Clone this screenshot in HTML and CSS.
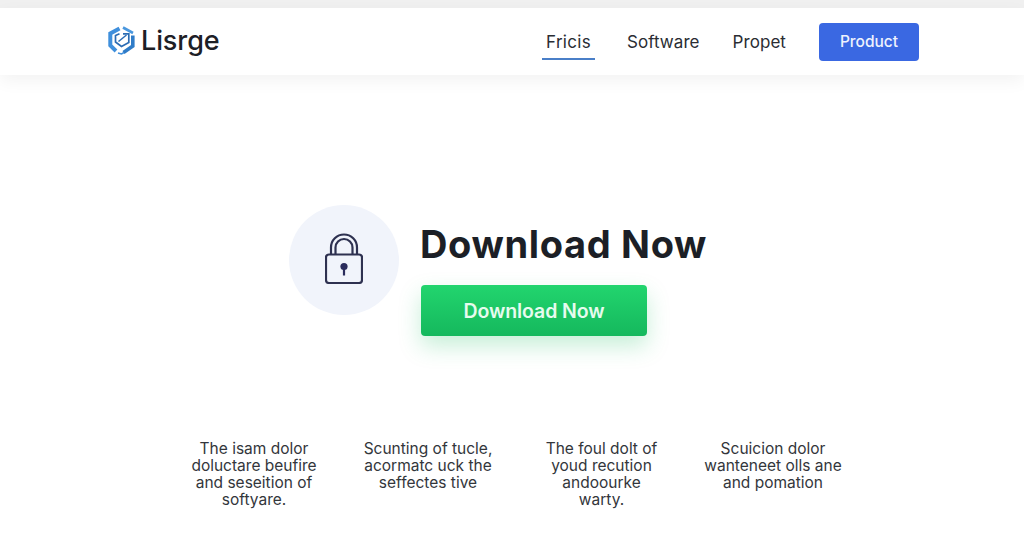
FILE: index.html
```html
<!DOCTYPE html>
<html lang="en">
    <head>
        <meta charset="UTF-8">
        <meta name="viewport" content="width=device-width, initial-scale=1.0">
        <title>Download Now</title>
        <link rel="stylesheet" href="styles.css">
    </head>
    <body>
        <header class="main-header">
            <a class="brand" href="#">
                <svg class="brand-logo" viewBox="0 0 27 29" width="27" height="29">
                    <path d="M11.500 2.500 2.300 7.500V19.500L8 25" fill="none" stroke="#3f8fdc" stroke-width="4"/>
                    <path d="M15 1.500 25 7" fill="none" stroke="#4a97de" stroke-width="2.600"/>
                    <path d="M24.800 9.500V20L15.500 26.500" fill="none" stroke="#2f7cc8" stroke-width="3.600"/>
                    <path d="M10 27 13.500 28 16 26.500" fill="none" stroke="#3f8fdc" stroke-width="1.600"/>
                    <path d="M15 7.800H20.800V16.500L13.500 20.500 7.500 16V9.500L11.500 7.800" fill="none" stroke="#2b6cb4" stroke-width="1.700"/>
                    <path d="M10.500 15.500 18.500 9" fill="none" stroke="#2b6cb4" stroke-width="1.500"/>
                </svg>
                <span>Lisrge</span>
            </a>
            <nav class="main-nav">
                <a class="nav-link nav-link-active" href="#">Fricis</a>
                <a class="nav-link" href="#">Software</a>
                <a class="nav-link" href="#">Propet</a>
                <a class="nav-btn" href="#">Product</a>
            </nav>
        </header>
        <main>
            <section class="hero">
                <div class="hero-icon">
                    <svg viewBox="0 0 38 51" width="38" height="51">
                        <path d="M6 22V14.500a13 13 0 0 1 26 0V22" fill="none" stroke="#2e3150" stroke-width="2.200"/>
                        <path d="M10.500 22V14.500a8.500 8.500 0 0 1 17 0V22" fill="none" stroke="#2e3150" stroke-width="2.200"/>
                        <rect x="1" y="21.500" width="36" height="28.500" rx="3" fill="#f1f4fb" stroke="#2e3150" stroke-width="2.200"/>
                        <circle cx="19" cy="33.500" r="3.600" fill="#2a2c5c"/>
                        <path d="M19 34v8.500" stroke="#2a2c5c" stroke-width="2.200"/>
                    </svg>
                </div>
                <div class="hero-text">
                    <h1>Download Now</h1>
                    <a class="download-btn" href="#">Download Now</a>
                </div>
            </section>
            <section class="features">
                <p class="feature">
                    <span>The isam dolor</span>
                    <span>doluctare beufire</span>
                    <span>and seseition of</span>
                    <span>softyare.</span>
                </p>
                <p class="feature">
                    <span>Scunting of tucle,</span>
                    <span>acormatc uck the</span>
                    <span>seffectes tive</span>
                </p>
                <p class="feature">
                    <span>The foul dolt of</span>
                    <span>youd recution</span>
                    <span>andoourke</span>
                    <span>warty.</span>
                </p>
                <p class="feature">
                    <span>Scuicion dolor</span>
                    <span>wanteneet olls ane</span>
                    <span>and pomation</span>
                </p>
            </section>
        </main>
    </body>
</html>
```

FILE: styles.css
```css
*
{
    box-sizing: border-box;
}
body
{
    margin: 0;
    height: 559px;
    overflow: hidden;
    padding-top: 8px;
    background-color: #ffffff;
    background-image: linear-gradient(#f0f0f0 0, #f0f0f0 8px, #ffffff 8px);
    font-family: Inter, "Liberation Sans", sans-serif;
}
a
{
    text-decoration: none;
    color: inherit;
}
.main-header
{
    display: flex;
    align-items: center;
    justify-content: space-between;
    height: 67px;
    padding: 0 105px 0 108px;
    background-color: #ffffff;
    box-shadow: 0 6px 16px rgba(0, 0, 0, 0.05);
}
.brand
{
    display: flex;
    align-items: center;
    gap: 6px;
    margin-bottom: 3px;
    font-size: 27px;
    font-weight: 500;
    letter-spacing: -0.1px;
    color: #1d2026;
}
.main-nav
{
    display: flex;
    align-items: center;
}
.nav-link
{
    margin-right: 33px;
    font-size: 17px;
    letter-spacing: 0.06px;
    color: #2a2d33;
}
.nav-link-active
{
    padding: 8px 4px 6px;
    margin-right: 32px;
    border-bottom: 2px solid #4a7fc8;
    letter-spacing: 0.3px;
}
.nav-btn
{
    display: flex;
    align-items: center;
    justify-content: center;
    width: 100px;
    height: 38px;
    border-radius: 4px;
    background-color: #3a68e2;
    color: #eef2fd;
    font-size: 15.5px;
    font-weight: 500;
}
.hero
{
    display: flex;
    align-items: flex-start;
    gap: 21px;
    margin: 130px 0 0 289px;
}
.hero-icon
{
    display: flex;
    align-items: center;
    justify-content: center;
    width: 110px;
    height: 110px;
    padding-bottom: 3px;
    border-radius: 50%;
    background-color: #f1f4fb;
}
.hero-text h1
{
    margin: 16px 0 0;
    font-size: 38px;
    line-height: 46px;
    font-weight: 700;
    letter-spacing: 0.65px;
    color: #1c1f26;
}
.download-btn
{
    display: flex;
    align-items: center;
    justify-content: center;
    width: 226px;
    height: 51px;
    margin: 18px 0 0 1px;
    border-radius: 4px;
    background-image: linear-gradient(#22d56e, #15b85d);
    box-shadow: 0 10px 22px rgba(30, 190, 100, 0.25);
    color: #e6fbee;
    font-size: 19.5px;
    font-weight: 600;
    letter-spacing: -0.1px;
}
.features
{
    display: grid;
    grid-template-columns: 174px 174px 173px 170px;
    margin: 104px 0 0 167px;
}
.feature
{
    margin: 0;
    text-align: center;
    font-size: 15.5px;
    color: #33363b;
}
.feature span
{
    display: block;
    height: 17px;
    line-height: 17px;
}
```
